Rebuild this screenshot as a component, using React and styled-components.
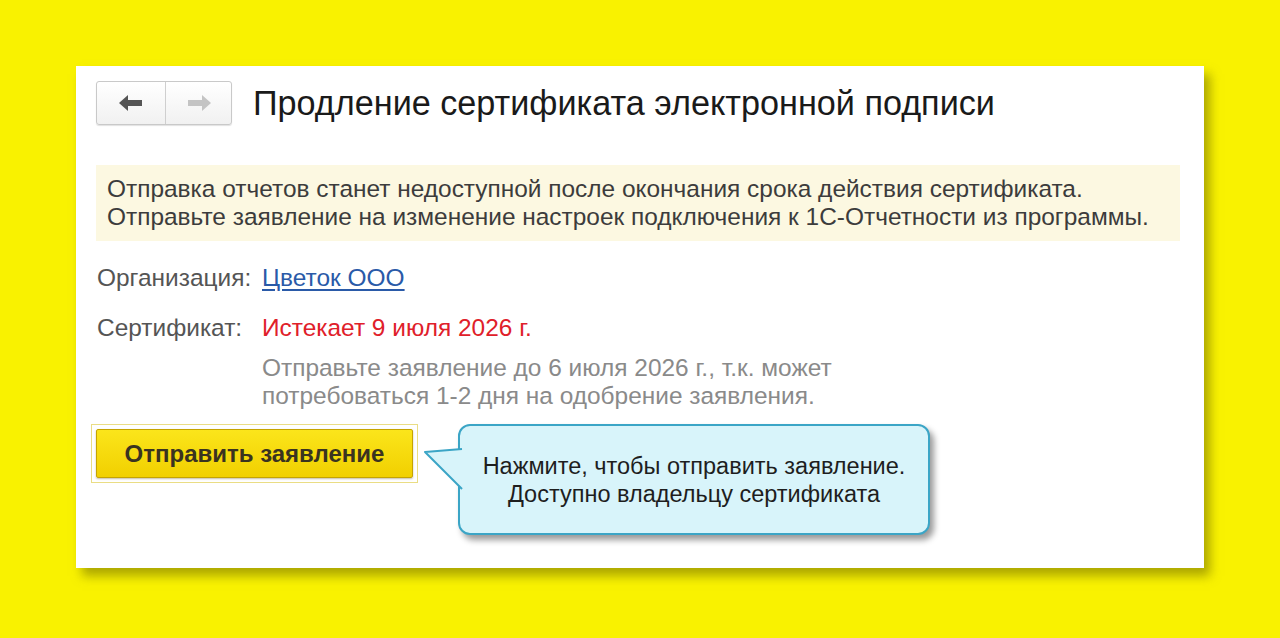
import React from "react";
import styled, { createGlobalStyle } from "styled-components";

const Global = createGlobalStyle`
  html, body {
    margin: 0;
    padding: 0;
    background: #f9f200;
    font-family: "Liberation Sans", Arial, sans-serif;
  }
`;

const Page = styled.div`
  width: 1280px;
  height: 638px;
  padding: 66px 0 0 76px;
  box-sizing: border-box;
  overflow: hidden;
`;

const Card = styled.div`
  width: 1128px;
  height: 502px;
  box-sizing: border-box;
  background: #fff;
  padding: 15px 24px 0 20px;
  box-shadow: 6px 8px 10px rgba(110, 105, 0, 0.55);
`;

const Header = styled.div`
  display: flex;
  align-items: center;
  gap: 21px;
`;

const NavGroup = styled.div`
  display: flex;
  height: 44px;
  border: 1px solid #c9c9c9;
  border-radius: 3px;
  box-sizing: border-box;
  background: linear-gradient(#ffffff, #f1f1f1);
  box-shadow: 0 1px 1px rgba(0, 0, 0, 0.12);
`;

const NavButton = styled.div`
  width: ${(p) => p.$w}px;
  display: flex;
  align-items: center;
  justify-content: center;
  & + & {
    border-left: 1px solid #cfcfcf;
  }
`;

const Title = styled.h1`
  margin: 0;
  font-size: 34.2px;
  font-weight: 400;
  color: #1a1a1a;
`;

const Notice = styled.div`
  margin-top: 40px;
  background: #fcf8e1;
  padding: 10px 11px;
  font-size: 24.45px;
  line-height: 28px;
  color: #3c3c3c;
`;

const Fields = styled.div`
  display: grid;
  grid-template-columns: 166px auto;
  margin-top: 23px;
  font-size: 24.45px;
  line-height: 28px;
  row-gap: 22px;
`;

const Label = styled.div`
  color: #555;
  padding-left: 1px;
`;

const Value = styled.div`
  color: ${(p) => p.$color || "#333"};
`;

const OrgLink = styled.span`
  color: #2a5aa8;
  text-decoration: underline;
  text-underline-offset: 3px;
`;

const Hint = styled.div`
  color: #8a8a8a;
  margin-top: 12px;
`;

const ActionRow = styled.div`
  display: flex;
  align-items: flex-start;
  gap: 40px;
  margin-top: 14px;
  margin-left: -5px;
`;

const ButtonFrame = styled.div`
  padding: 4px;
  border: 1px solid #eadd84;
  background: #fff;
`;

const SendButton = styled.div`
  width: 317px;
  height: 49px;
  box-sizing: border-box;
  display: flex;
  align-items: center;
  justify-content: center;
  border: 1px solid #c5a400;
  border-radius: 2px;
  background: linear-gradient(#fbe51b, #f1d000);
  box-shadow: 0 1px 2px rgba(90, 70, 0, 0.35);
  font-size: 24px;
  font-weight: 700;
  color: #3a3320;
`;

const Callout = styled.div`
  position: relative;
  width: 472px;
  height: 111px;
  box-sizing: border-box;
  border: 2px solid #3ba5c6;
  border-radius: 12px;
  background: #d8f4fa;
  box-shadow: 4px 5px 6px rgba(0, 0, 0, 0.4);
  display: flex;
  flex-direction: column;
  align-items: center;
  justify-content: center;
  font-size: 23.5px;
  line-height: 28px;
  color: #1e1e1e;
  text-align: center;
`;

const Tail = styled.svg`
  position: absolute;
  left: -37px;
  top: 20px;
`;

const ArrowIcon = ({ color, flip }) => (
  <svg width="26" height="18" viewBox="0 0 26 18" style={flip ? { transform: "scaleX(-1)" } : undefined}>
    <path d="M1 9 L10 1 L10 6 L24 6 L24 12 L10 12 L10 17 Z" fill={color} />
  </svg>
);

export default function App() {
  return (
    <>
      <Global />
      <Page>
        <Card>
          <Header>
            <NavGroup>
              <NavButton $w={68}>
                <ArrowIcon color="#555555" />
              </NavButton>
              <NavButton $w={65}>
                <ArrowIcon color="#c4c4c4" flip />
              </NavButton>
            </NavGroup>
            <Title>Продление сертификата электронной подписи</Title>
          </Header>

          <Notice>
            Отправка отчетов станет недоступной после окончания срока действия сертификата.
            <br />
            Отправьте заявление на изменение настроек подключения к 1С-Отчетности из программы.
          </Notice>

          <Fields>
            <Label>Организация:</Label>
            <Value>
              <OrgLink>Цветок ООО</OrgLink>
            </Value>
            <Label>Сертификат:</Label>
            <Value $color="#e0202a">
              Истекает 9 июля 2026 г.
              <Hint>
                Отправьте заявление до 6 июля 2026 г., т.к. может
                <br />
                потребоваться 1-2 дня на одобрение заявления.
              </Hint>
            </Value>
          </Fields>

          <ActionRow>
            <ButtonFrame>
              <SendButton>Отправить заявление</SendButton>
            </ButtonFrame>
            <Callout>
              <Tail width="40" height="50" viewBox="0 0 40 50">
                <path d="M39 3 L2 6 L39 43" fill="#d8f4fa" stroke="#3ba5c6" strokeWidth="2" strokeLinejoin="round" />
              </Tail>
              <div>Нажмите, чтобы отправить заявление.</div>
              <div>Доступно владельцу сертификата</div>
            </Callout>
          </ActionRow>
        </Card>
      </Page>
    </>
  );
}
